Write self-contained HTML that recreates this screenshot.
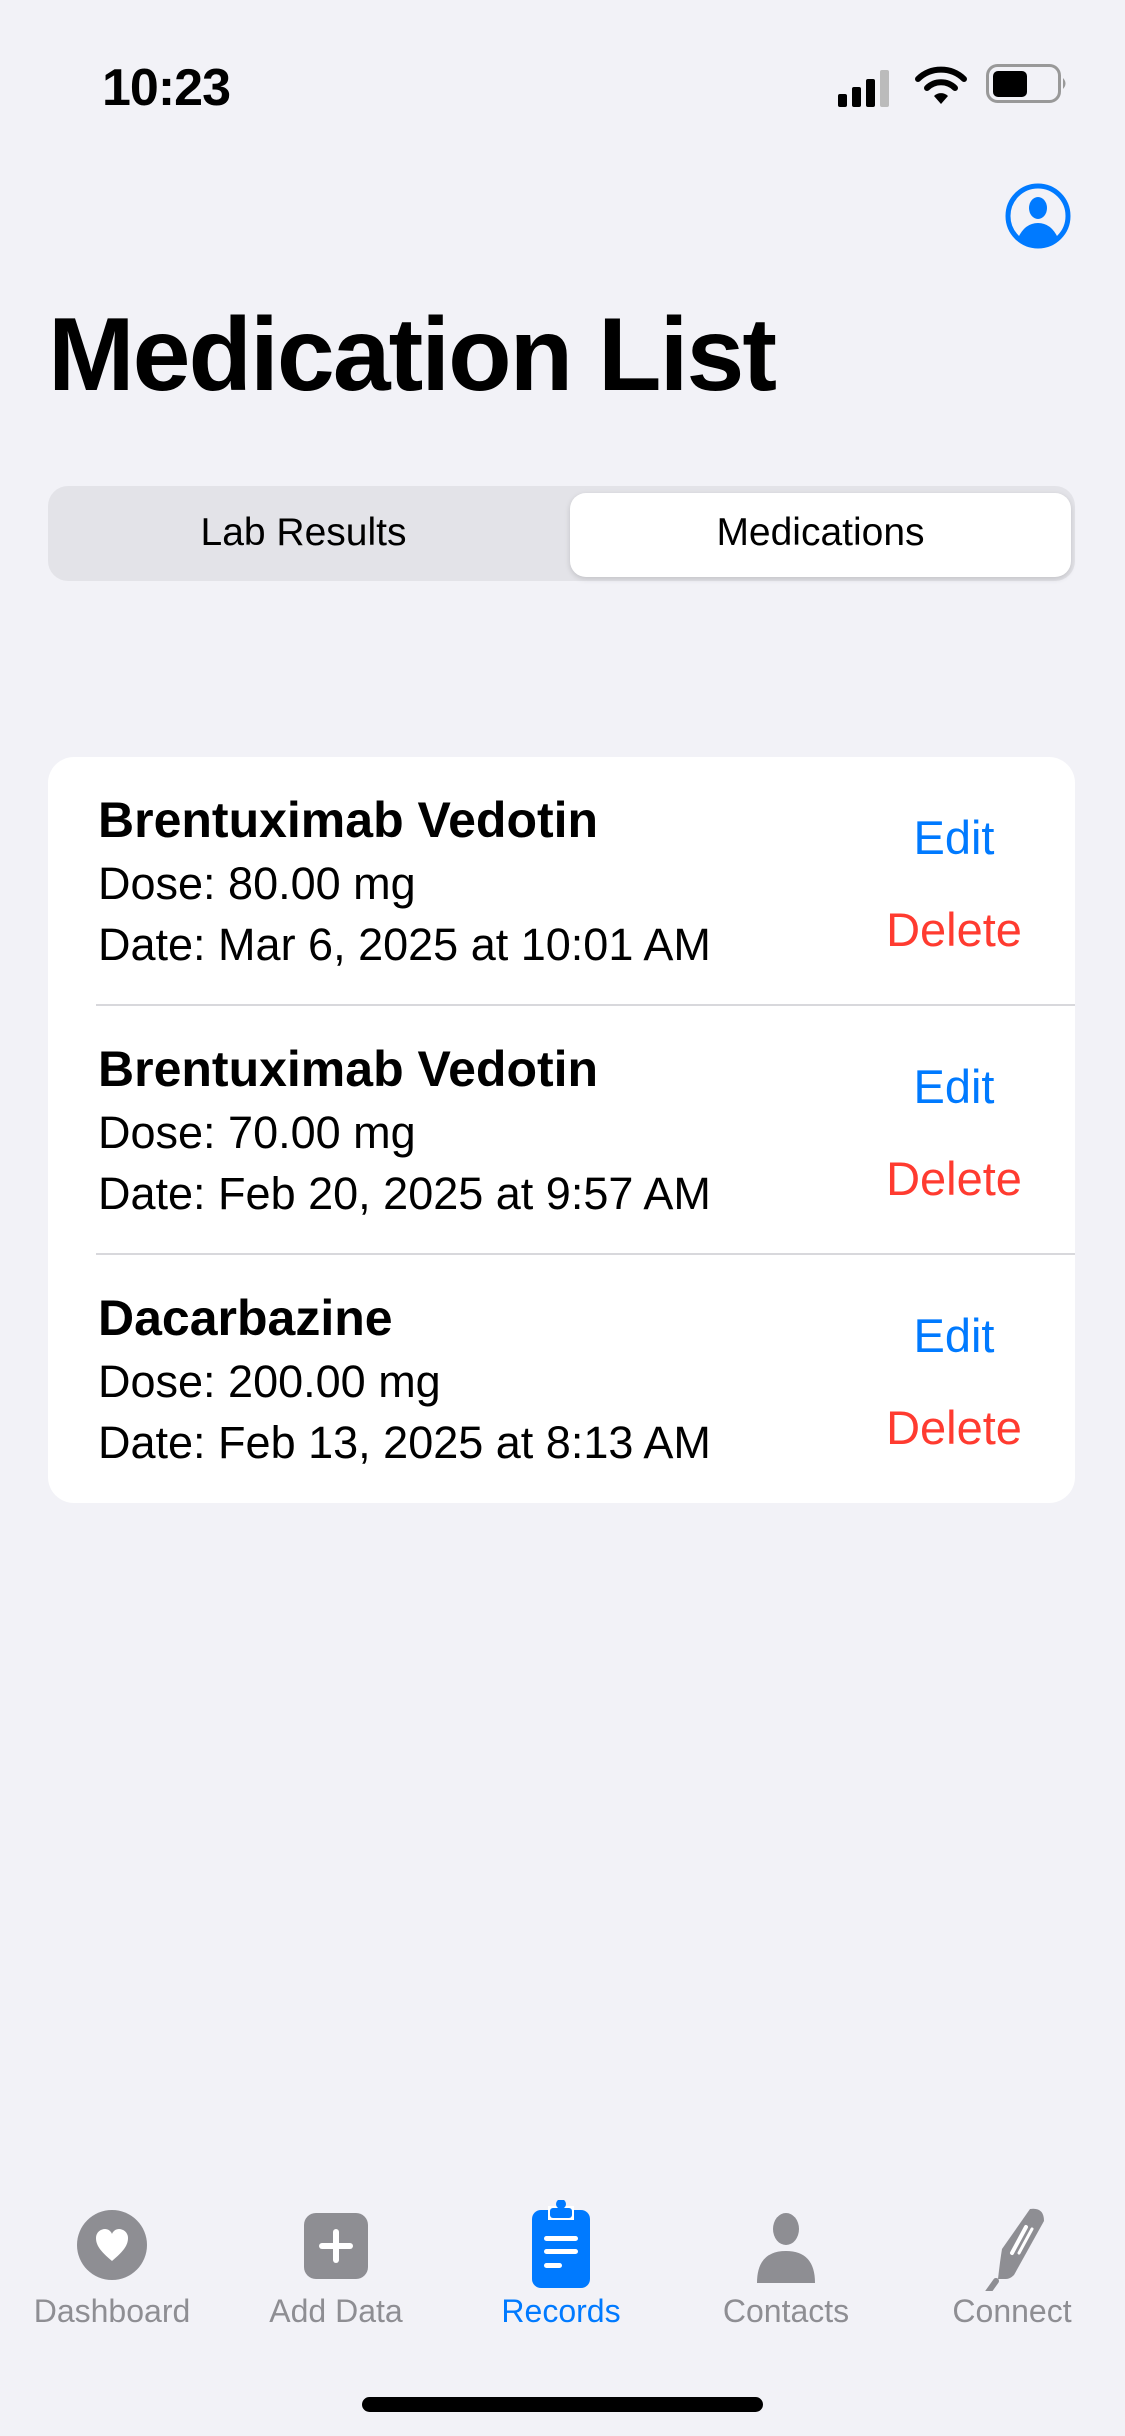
<!DOCTYPE html>
<html><head><meta charset="utf-8">
<style>
*{margin:0;padding:0;box-sizing:border-box}
html,body{width:1125px;height:2436px;background:#f2f2f7;font-family:"Liberation Sans",sans-serif;overflow:hidden;position:relative;color:#000}
.abs{position:absolute}
.time{left:102px;top:58px;font-size:52px;font-weight:bold;letter-spacing:-1px}
.title{left:48px;top:296px;font-size:104px;font-weight:bold;letter-spacing:-2px}
.seg{left:48px;top:486px;width:1027px;height:95px;background:#e3e3e8;border-radius:20px}
.sel{left:570px;top:493px;width:501px;height:84px;background:#fff;border-radius:16px;box-shadow:0 2px 6px rgba(0,0,0,.15)}
.segt{font-size:39px;top:511px;width:501px;text-align:center}
.card{left:48px;top:757px;width:1027px;height:746px;background:#fff;border-radius:26px}
.row{position:absolute;left:0;width:1027px;height:249px}
.nm{position:absolute;left:50px;top:34px;font-size:50px;font-weight:bold}
.l2{position:absolute;left:50px;top:101px;font-size:45px}
.l3{position:absolute;left:50px;top:162px;font-size:45px}
.ed{position:absolute;left:856px;width:100px;text-align:center;top:53px;font-size:47px;color:#007aff}
.de{position:absolute;left:820px;width:172px;text-align:center;top:145px;font-size:47px;color:#ff3b30}
.sep{position:absolute;left:48px;right:0;height:2px;background:#d8d8dc}
.tab{position:absolute;top:2293px;width:220px;text-align:center;font-size:32px;color:#8e8e93}
</style></head><body>
<div class="abs time">10:23</div>
<svg class="abs" style="left:838px;top:68px" width="60" height="40" viewBox="0 0 60 40">
<rect x="0" y="26" width="9" height="13" rx="2" fill="#000"/>
<rect x="14" y="19" width="9" height="20" rx="2" fill="#000"/>
<rect x="28" y="11" width="9" height="28" rx="2" fill="#000"/>
<rect x="42" y="2" width="9" height="37" rx="2" fill="#bbb"/>
</svg>
<svg class="abs" style="left:915px;top:64px" width="52" height="42" viewBox="0 0 52 42">
<path d="M3 15 A33 33 0 0 1 49 15" stroke="#000" stroke-width="6" fill="none" stroke-linecap="round"/>
<path d="M12 24 A20 20 0 0 1 40 24" stroke="#000" stroke-width="6" fill="none" stroke-linecap="round"/>
<path d="M19 32 L26 40 L33 32 A10 10 0 0 0 19 32Z" fill="#000"/>
</svg>
<svg class="abs" style="left:986px;top:64px" width="82" height="40" viewBox="0 0 82 40">
<rect x="1.5" y="1.5" width="72" height="36" rx="10" fill="none" stroke="#999" stroke-width="3"/>
<rect x="7" y="7" width="34" height="26" rx="5" fill="#000"/>
<path d="M77 14 Q82 19.5 77 25Z" fill="#999"/>
</svg>
<svg class="abs" style="left:1005px;top:183px" width="66" height="66" viewBox="0 0 66 66">
<circle cx="33" cy="33" r="30" fill="none" stroke="#007aff" stroke-width="5"/>
<ellipse cx="33" cy="25" rx="9" ry="11" fill="#007aff"/>
<path d="M13 55 Q20 40 33 40 Q46 40 53 55 Q44 63 33 63 Q22 63 13 55Z" fill="#007aff"/>
</svg>
<div class="abs title">Medication List</div>
<div class="abs seg"></div>
<div class="abs sel"></div>
<div class="abs segt" style="left:53px">Lab Results</div>
<div class="abs segt" style="left:570px">Medications</div>
<div class="abs card">
<div class="row" style="top:0"><div class="nm">Brentuximab Vedotin</div><div class="l2">Dose: 80.00 mg</div><div class="l3">Date: Mar 6, 2025 at 10:01 AM</div><div class="ed">Edit</div><div class="de">Delete</div></div>
<div class="sep" style="top:247px"></div>
<div class="row" style="top:249px"><div class="nm">Brentuximab Vedotin</div><div class="l2">Dose: 70.00 mg</div><div class="l3">Date: Feb 20, 2025 at 9:57 AM</div><div class="ed">Edit</div><div class="de">Delete</div></div>
<div class="sep" style="top:496px"></div>
<div class="row" style="top:498px"><div class="nm">Dacarbazine</div><div class="l2">Dose: 200.00 mg</div><div class="l3">Date: Feb 13, 2025 at 8:13 AM</div><div class="ed">Edit</div><div class="de">Delete</div></div>
</div>
<svg class="abs" style="left:76px;top:2209px" width="72" height="72" viewBox="0 0 72 72">
<circle cx="36" cy="36" r="35" fill="#8e8e93"/>
<path d="M36 52 C24 42 20 36 20 29 C20 23 25 20 29 20 C32 20 35 22 36 25 C37 22 40 20 43 20 C47 20 52 23 52 29 C52 36 48 42 36 52Z" fill="#fff"/>
</svg>
<svg class="abs" style="left:304px;top:2213px" width="64" height="66" viewBox="0 0 64 66">
<rect x="0" y="0" width="64" height="66" rx="12" fill="#8e8e93"/>
<rect x="29" y="16" width="6" height="34" rx="3" fill="#fff"/>
<rect x="15" y="30" width="34" height="6" rx="3" fill="#fff"/>
</svg>
<svg class="abs" style="left:532px;top:2200px" width="58" height="88" viewBox="0 0 58 88">
<rect x="0" y="10" width="58" height="78" rx="9" fill="#007aff"/>
<path d="M16 6 h26 v14 h-26z" fill="#fff"/>
<rect x="18" y="8" width="22" height="10" rx="3" fill="#007aff"/>
<circle cx="29" cy="4" r="5" fill="#007aff"/>
<rect x="12" y="36" width="34" height="5" rx="2.5" fill="#fff"/>
<rect x="12" y="49" width="34" height="5" rx="2.5" fill="#fff"/>
<rect x="12" y="63" width="18" height="5" rx="2.5" fill="#fff"/>
</svg>
<svg class="abs" style="left:755px;top:2213px" width="62" height="70" viewBox="0 0 62 70">
<ellipse cx="31" cy="16" rx="13" ry="16" fill="#8e8e93"/>
<path d="M2 70 Q2 38 31 38 Q60 38 60 70Z" fill="#8e8e93"/>
</svg>
<svg class="abs" style="left:970px;top:2205px" width="80" height="86" viewBox="0 0 80 86">
<path d="M60 4 Q74 2 74 16 L44 70 Q40 74 36 74 L28 74 Q30 56 32 44Z" fill="#8e8e93"/>
<path d="M26 76 L16 90" stroke="#8e8e93" stroke-width="6" stroke-linecap="round"/>
<path d="M42 48 L56 22" stroke="#fff" stroke-width="4" stroke-linecap="round"/>
<path d="M49 48 L62 24" stroke="#fff" stroke-width="3" stroke-linecap="round"/>
</svg>
<div class="tab" style="left:2px">Dashboard</div>
<div class="tab" style="left:226px">Add Data</div>
<div class="tab" style="left:451px;color:#007aff">Records</div>
<div class="tab" style="left:676px">Contacts</div>
<div class="tab" style="left:902px">Connect</div>
<div class="abs" style="left:362px;top:2397px;width:401px;height:15px;background:#000;border-radius:8px"></div>
</body></html>
